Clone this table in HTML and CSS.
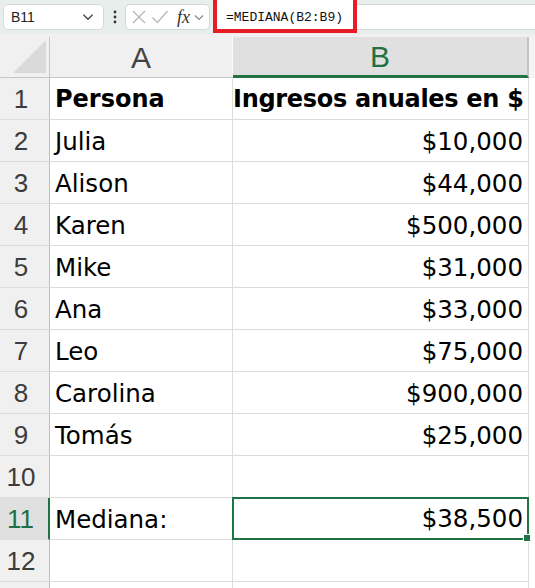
FILE: index.html
```html
<!DOCTYPE html>
<html lang="es">
<head>
<meta charset="utf-8">
<title>MEDIANA</title>
<link rel="stylesheet" href="styles.css">
</head>
<body>
<div class="toolbar">
  <div class="namebox">
    <span class="name">B11</span>
    <svg class="chev" width="12" height="8" viewBox="0 0 12 8"><path d="M1.5 1.8 L6 6.2 L10.5 1.8" fill="none" stroke="#444" stroke-width="1.4"/></svg>
  </div>
  <div class="dots">
    <svg width="4" height="14" viewBox="0 0 4 14"><circle cx="2" cy="2" r="1.4" fill="#333"/><circle cx="2" cy="7" r="1.4" fill="#333"/><circle cx="2" cy="12" r="1.4" fill="#333"/></svg>
  </div>
  <div class="fxbox">
    <svg width="16" height="16" viewBox="0 0 16 16"><path d="M2 2 L14 14 M14 2 L2 14" stroke="#b5b5b5" stroke-width="1.2" fill="none"/></svg>
    <svg width="18" height="16" viewBox="0 0 18 16"><path d="M1.5 8.5 L6.5 13.5 L16.5 2" stroke="#b5b5b5" stroke-width="1.2" fill="none"/></svg>
    <span class="fx">fx</span>
    <svg width="10" height="7" viewBox="0 0 10 7"><path d="M1 1.5 L5 5.5 L9 1.5" fill="none" stroke="#8a8a8a" stroke-width="1.2"/></svg>
  </div>
  <div class="formula">
    <span class="highlight">=MEDIANA(B2:B9)</span>
  </div>
</div>
<div class="sheet">
  <div class="corner"><span class="tri"></span></div>
  <div class="colhead">A</div>
  <div class="colhead sel">B</div>
  <div class="edge head"></div>

  <div class="rowhead">1</div><div class="cell a bold">Persona</div><div class="cell b bold hdr">Ingresos anuales en $</div><div class="edge"></div>
  <div class="rowhead">2</div><div class="cell a">Julia</div><div class="cell b">$10,000</div><div class="edge"></div>
  <div class="rowhead">3</div><div class="cell a">Alison</div><div class="cell b">$44,000</div><div class="edge"></div>
  <div class="rowhead">4</div><div class="cell a">Karen</div><div class="cell b">$500,000</div><div class="edge"></div>
  <div class="rowhead">5</div><div class="cell a">Mike</div><div class="cell b">$31,000</div><div class="edge"></div>
  <div class="rowhead">6</div><div class="cell a">Ana</div><div class="cell b">$33,000</div><div class="edge"></div>
  <div class="rowhead">7</div><div class="cell a">Leo</div><div class="cell b">$75,000</div><div class="edge"></div>
  <div class="rowhead">8</div><div class="cell a">Carolina</div><div class="cell b">$900,000</div><div class="edge"></div>
  <div class="rowhead">9</div><div class="cell a">Tomás</div><div class="cell b">$25,000</div><div class="edge"></div>
  <div class="rowhead">10</div><div class="cell a"></div><div class="cell b"></div><div class="edge"></div>
  <div class="rowhead sel">11</div><div class="cell a">Mediana:</div><div class="cell b active">$38,500</div><div class="edge"></div>
  <div class="rowhead">12</div><div class="cell a"></div><div class="cell b"></div><div class="edge"></div>
  <div class="rowhead last"></div><div class="cell a last"></div><div class="cell b last"></div><div class="edge"></div>
</div>
</body>
</html>
```
FILE: styles.css
```css
* { box-sizing: border-box; }
html, body {
  margin: 0;
  padding: 0;
}
body {
  width: 535px;
  height: 588px;
  overflow: hidden;
  background: #f0f0f0;
  font-family: "DejaVu Sans", sans-serif;
  color: #000;
}
.toolbar {
  position: relative;
  height: 34px;
  background: #e8eeec;
  display: flex;
  align-items: center;
  padding: 0 0 0 3px;
  margin-bottom: 3px;
}
.namebox {
  width: 101px;
  height: 26px;
  background: #fff;
  border: 1px solid #d4d8d6;
  border-radius: 5px;
  display: flex;
  align-items: center;
  justify-content: space-between;
  padding: 0 9px 0 7px;
}
.name {
  font-family: "Liberation Sans", sans-serif;
  font-size: 14px;
  color: #222;
}
.dots {
  width: 21px;
  display: flex;
  justify-content: center;
  align-items: center;
}
.fxbox {
  width: 85px;
  height: 26px;
  background: #fff;
  border: 1px solid #d4d8d6;
  border-radius: 5px;
  display: flex;
  align-items: center;
  padding: 0 3px 0 5px;
  gap: 4px;
}
.fx {
  font-family: "Liberation Serif", serif;
  font-style: italic;
  font-size: 18px;
  color: #333;
  margin-left: 4px;
  line-height: 1;
}
.formula {
  flex: 1;
  height: 26px;
  margin-left: 4px;
  background: #fff;
  border: 1px solid #d4d8d6;
  border-right: none;
}
.highlight {
  position: absolute;
  left: 213px;
  top: -4px;
  width: 144px;
  height: 37px;
  border: 4px solid #e81c24;
  font-family: "Liberation Mono", monospace;
  font-size: 13px;
  color: #111;
  padding: 10px 0 0 9px;
  background: #fff;
}
.sheet {
  display: grid;
  grid-template-columns: 50px 183px 296px 6px;
  grid-template-rows: 41px repeat(12, 42px) 6px;
}
.corner {
  background: #f0f0f0;
  border-right: 1px solid #c6c6c6;
  border-bottom: 1px solid #c6c6c6;
  position: relative;
}
.tri {
  position: absolute;
  right: 3px;
  bottom: 4px;
  width: 0;
  height: 0;
  border-left: 33px solid transparent;
  border-bottom: 33px solid #dadada;
}
.colhead {
  background: #f0f0f0;
  border-bottom: 1px solid #c6c6c6;
  border-right: 1px solid #fafafa;
  font-family: "Liberation Sans", sans-serif;
  font-size: 30px;
  color: #444;
  display: flex;
  align-items: center;
  justify-content: center;
  padding-top: 2px;
}
.colhead.sel {
  background: #e0e0e0;
  color: #1e7145;
  border-bottom: 3px solid #217346;
  border-right: 2px solid #c4c4c4;
}
.edge {
  background: #fff;
}
.edge.head {
  background: #f4f4f4;
}
.rowhead {
  background: #f0f0f0;
  border-right: 1px solid #bfbfbf;
  border-bottom: 1px solid #dcdcdc;
  font-family: "Liberation Sans", sans-serif;
  font-size: 26px;
  color: #3c3c3c;
  display: flex;
  align-items: center;
  justify-content: center;
  padding-right: 7px;
  padding-top: 2px;
}
.rowhead.sel {
  background: #e0e0e0;
  color: #1e7145;
  border-right: 2px solid #217346;
}
.cell {
  background: #fff;
  border-bottom: 1px solid #dcdcdc;
  font-size: 24.5px;
  line-height: 43px;
  white-space: nowrap;
  overflow: visible;
}
.cell.last, .rowhead.last {
  border-bottom: none;
}
.cell.a {
  border-right: 1px solid #dcdcdc;
  padding-left: 5px;
}
.cell.b {
  text-align: right;
  padding-right: 5px;
  border-right: 1px solid #dcdcdc;
}
.bold {
  font-weight: bold;
  font-size: 24px;
}
.hdr {
  letter-spacing: -0.3px;
}
.cell.active {
  position: relative;
  border: 2px solid #217346;
  line-height: 40px;
  padding-right: 4px;
  margin: -1px 0 0 -1px;
}
.cell.active::after {
  content: "";
  position: absolute;
  right: -4px;
  bottom: -4px;
  width: 6px;
  height: 6px;
  background: #217346;
  border: 1px solid #fff;
}
```
